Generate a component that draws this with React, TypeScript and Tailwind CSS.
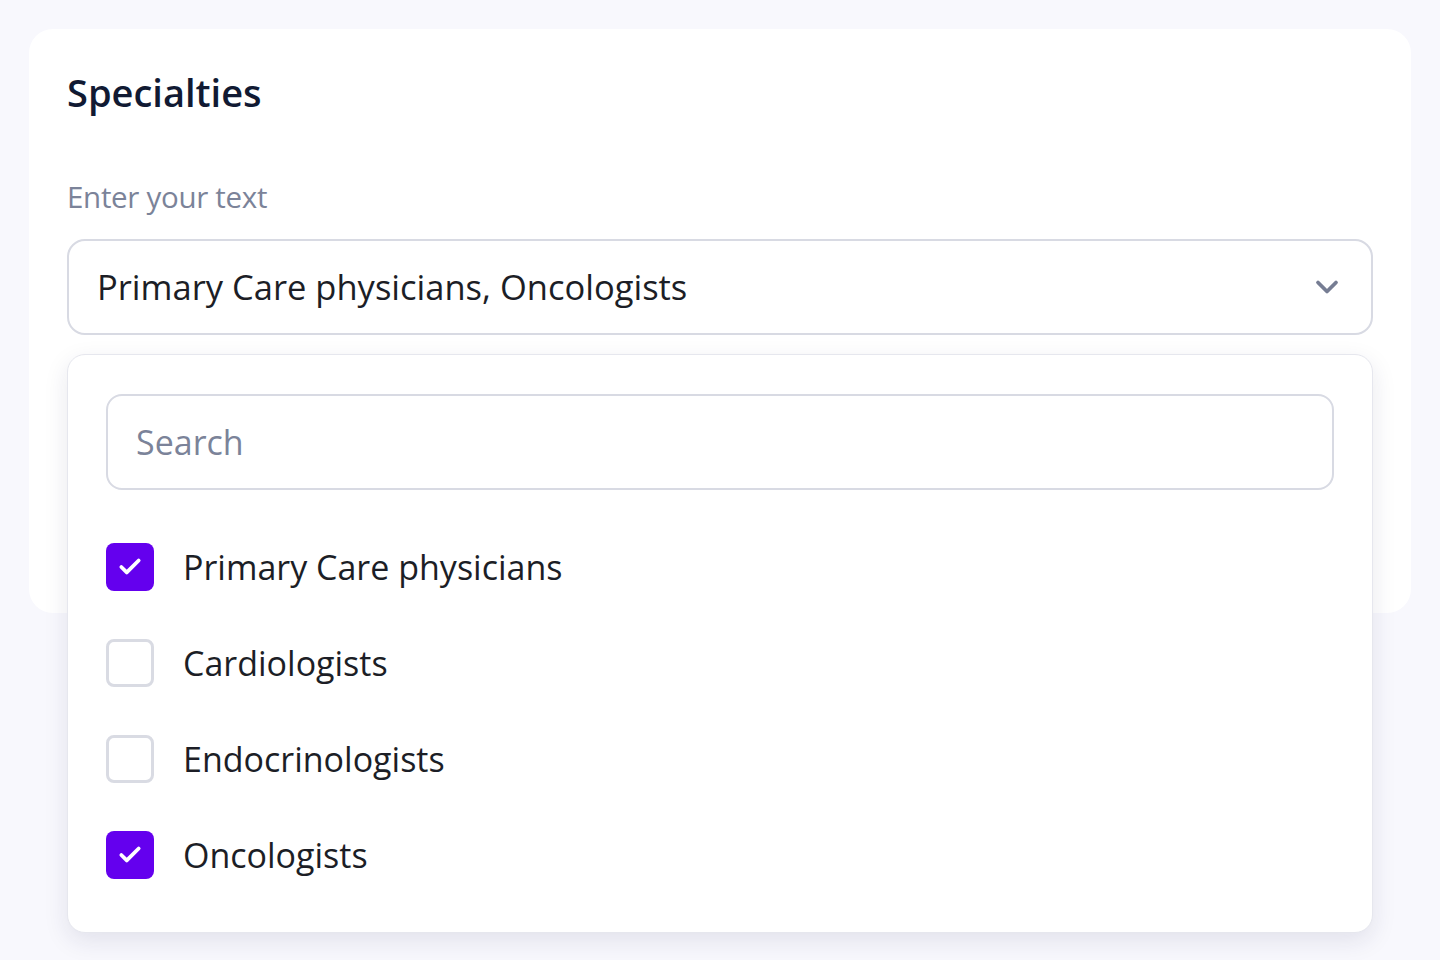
import { ChevronDown, Check } from "lucide-react";

const items = [
  { label: "Primary Care physicians", checked: true },
  { label: "Cardiologists", checked: false },
  { label: "Endocrinologists", checked: false },
  { label: "Oncologists", checked: true },
];

export default function App() {
  return (
    <div
      className="min-h-[960px] bg-[#f8f8fd] p-[29px]"
      style={{ fontFamily: '"Open Sans", Lato, sans-serif' }}
    >
      <div className="relative h-[584px] rounded-[24px] bg-white px-[38px] pt-[39px]">
        <h2 className="text-[38px] font-semibold leading-[48px] text-[#111a33]">
          Specialties
        </h2>
        <div className="mt-[61px] text-[29.5px] leading-[40px] tracking-[-0.3px] text-[#7b8399]">
          Enter your text
        </div>
        <div className="mt-[22px] flex h-[96px] items-center justify-between rounded-[18px] border-2 border-[#d8dae3] pl-[28px] pr-[26px]">
          <span className="text-[34.5px] text-[#1c1e26]">
            Primary Care physicians, Oncologists
          </span>
          <ChevronDown className="h-[36px] w-[36px] text-[#767d93]" strokeWidth={2.5} />
        </div>

        <div className="absolute left-[38px] right-[38px] top-[325px] rounded-[18px] border border-[#e6e7ee] bg-white px-[38px] pb-[29px] pt-[39px] shadow-[0_8px_24px_rgba(30,30,80,0.10)]">
          <div className="flex h-[96px] items-center rounded-[16px] border-2 border-[#d8dae3] px-[28px] text-[34px] text-[#7b8399]">
            Search
          </div>
          <div className="mt-[29px] flex flex-col">
            {items.map((it) => (
              <div key={it.label} className="flex h-[96px] items-center gap-[29px]">
                {it.checked ? (
                  <div className="flex h-[48px] w-[48px] items-center justify-center rounded-[8px] bg-[#6400ee]">
                    <Check className="h-[26px] w-[26px] text-white" strokeWidth={3.5} />
                  </div>
                ) : (
                  <div className="h-[48px] w-[48px] rounded-[8px] border-[3px] border-[#d9dbe3]" />
                )}
                <span className="text-[34px] text-[#1c1e26]">{it.label}</span>
              </div>
            ))}
          </div>
        </div>
      </div>
    </div>
  );
}
